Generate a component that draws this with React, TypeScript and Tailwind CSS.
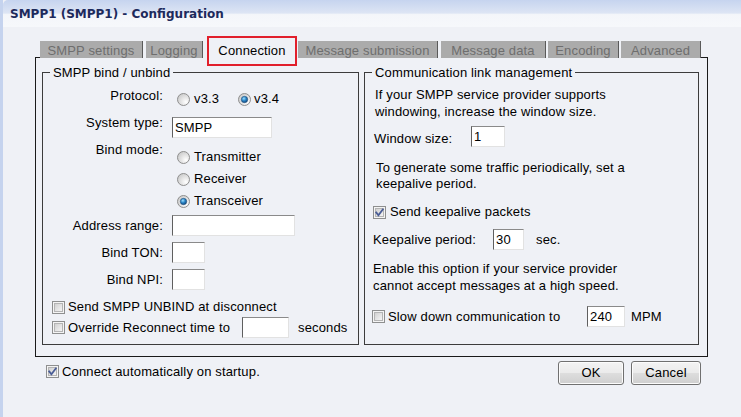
import React from "react";

function Radio({ checked }: { checked?: boolean }) {
  return (
    <svg width="13" height="13" viewBox="0 0 13 13" className="shrink-0">
      <defs>
        <radialGradient id="rgOuter" cx="0.7" cy="0.7" r="0.8">
          <stop offset="0" stopColor="#ffffff" />
          <stop offset="1" stopColor="#c9c9c9" />
        </radialGradient>
        <radialGradient id="rgDot" cx="0.4" cy="0.35" r="0.75">
          <stop offset="0" stopColor="#9fe0ff" />
          <stop offset="0.45" stopColor="#2a86c8" />
          <stop offset="1" stopColor="#0b3a6e" />
        </radialGradient>
      </defs>
      <circle cx="6.5" cy="6.5" r="6" fill="url(#rgOuter)" stroke="#8f8f8f" strokeWidth="1" />
      {checked && <circle cx="6.5" cy="6.5" r="3.2" fill="url(#rgDot)" stroke="#244f7a" strokeWidth="0.6" />}
    </svg>
  );
}

function Check({ checked }: { checked?: boolean }) {
  return (
    <svg width="13" height="13" viewBox="0 0 13 13" className="shrink-0">
      <defs>
        <linearGradient id="cbIn" x1="0" y1="0" x2="1" y2="1">
          <stop offset="0" stopColor="#cfcfcf" />
          <stop offset="1" stopColor="#f7f7f7" />
        </linearGradient>
      </defs>
      <rect x="0.5" y="0.5" width="12" height="12" fill="#f4f4f4" stroke="#8e8f8f" />
      <rect x="2.5" y="2.5" width="8" height="8" fill="url(#cbIn)" stroke="#b4b4b4" />
      {checked && (
        <path d="M3.2 6.4 L5.4 9.2 L9.8 3.4" fill="none" stroke="#4a5d96" strokeWidth="1.8" strokeLinecap="square" />
      )}
    </svg>
  );
}

function Box({ w, value }: { w: string; value?: string }) {
  return (
    <div
      className={`${w} h-[21px] shrink-0 bg-white border border-t-[#8a8a8a] border-l-[#5f5f5f] border-r-[#e2e2e2] border-b-[#e2e2e2] pl-[2px] leading-[19px] text-black`}
    >
      {value}
    </div>
  );
}

function Tab({ w, label, ml }: { w: string; label: string; ml?: string }) {
  return (
    <div
      className={`${w} ${ml ?? ""} h-[17px] shrink-0 bg-[#ababab] border-r border-r-[#5a5a5a] text-[#6e6e6e] text-center leading-[17px] pt-[1px]`}
    >
      {label}
    </div>
  );
}

export default function App() {
  return (
    <div className="w-[741px] h-[417px] overflow-hidden bg-[#eff1f6] border-l-[3px] border-l-[#c5d3ee] font-['Liberation_Sans',Arial,sans-serif] text-[13px] text-black tracking-[0.15px]">
      {/* Title bar */}
      <div className="h-[27px] flex items-center pl-[7px] rounded-tl-[5px] bg-[linear-gradient(to_bottom,#c6d4ef_0%,#dde5f4_48%,#f4f6fa_54%,#f6f8fb_100%)]">
        <span className="font-['DejaVu_Sans',Verdana,sans-serif] font-bold text-[12px] tracking-normal text-[#1d2a5c]">
          SMPP1 (SMPP1) - Configuration
        </span>
      </div>

      {/* Tabs + panel */}
      <div className="ml-[32px] mt-[14px] w-[673px]">
        <div className="flex h-[17px]">
          <div className="w-[5px] h-[17px] border-b border-b-[#1a1a1a] shrink-0" />
          <Tab w="w-[103px]" label="SMPP settings" />
          <Tab w="w-[57px]" ml="ml-[3px]" label="Logging" />
          <div className="relative ml-[1px] w-[94px] h-[17px] shrink-0 text-center leading-[17px] text-black pl-[2px] pt-[1px]">
            Connection
            <div className="absolute left-[3px] right-[1px] -top-[5px] -bottom-[8px] border-2 border-[#e11f2b] z-10" />
          </div>
          <Tab w="w-[140px]" label="Message submission" />
          <Tab w="w-[105px]" ml="ml-[3px]" label="Message data" />
          <Tab w="w-[71px]" ml="ml-[2px]" label="Encoding" />
          <Tab w="w-[80px]" ml="ml-[2px]" label="Advanced" />
          <div className="flex-1 h-[17px] border-b border-b-[#1a1a1a]" />
        </div>

        <div className="h-[299px] border-l border-r border-b border-[#1a1a1a] pt-[7px] pl-[6px] pr-[8px] flex gap-[5px]">
          {/* Left group */}
          <fieldset className="w-[317px] h-[280px] shrink-0 border border-[#3c3c3c] m-0 p-0 min-w-0">
            <legend className="ml-[7px] px-[3px] leading-[15px]">SMPP bind / unbind</legend>

            <div className="flex items-center h-[22px] mt-[8px]">
              <div className="w-[120px] text-right mb-[6px]">Protocol:</div>
              <div className="ml-[14px] flex">
                <div className="w-[61px] flex items-center gap-[4px]">
                  <Radio />
                  <span>v3.3</span>
                </div>
                <div className="flex items-center gap-[3px]">
                  <Radio checked />
                  <span>v3.4</span>
                </div>
              </div>
            </div>

            <div className="flex items-center h-[21px] mt-[7px]">
              <div className="w-[120px] text-right mb-[9px]">System type:</div>
              <div className="ml-[9px]">
                <Box w="w-[100px]" value="SMPP" />
              </div>
            </div>

            <div className="flex items-center h-[22px] mt-[8px]">
              <div className="w-[120px] text-right mb-[14px]">Bind mode:</div>
              <div className="ml-[14px] flex items-center gap-[4px]">
                <Radio />
                <span>Transmitter</span>
              </div>
            </div>
            <div className="flex items-center h-[22px]">
              <div className="w-[120px]" />
              <div className="ml-[14px] flex items-center gap-[4px]">
                <Radio />
                <span>Receiver</span>
              </div>
            </div>
            <div className="flex items-center h-[22px]">
              <div className="w-[120px]" />
              <div className="ml-[14px] flex items-center gap-[4px]">
                <Radio checked />
                <span>Transceiver</span>
              </div>
            </div>

            <div className="flex items-center h-[21px] mt-[3px]">
              <div className="w-[120px] text-right">Address range:</div>
              <div className="ml-[9px]">
                <Box w="w-[123px]" />
              </div>
            </div>
            <div className="flex items-center h-[21px] mt-[6px]">
              <div className="w-[120px] text-right">Bind TON:</div>
              <div className="ml-[9px]">
                <Box w="w-[33px]" />
              </div>
            </div>
            <div className="flex items-center h-[21px] mt-[6px]">
              <div className="w-[120px] text-right">Bind NPI:</div>
              <div className="ml-[9px]">
                <Box w="w-[33px]" />
              </div>
            </div>

            <div className="flex items-center h-[20px] mt-[7px] pl-[9px] gap-[3px]">
              <Check />
              <span>Send SMPP UNBIND at disconnect</span>
            </div>
            <div className="flex items-center h-[21px] pl-[9px]">
              <div className="w-[190px] flex items-center gap-[3px]">
                <Check />
                <span>Override Reconnect time to</span>
              </div>
              <Box w="w-[47px]" />
              <span className="ml-[9px]">seconds</span>
            </div>
          </fieldset>

          {/* Right group */}
          <fieldset className="flex-1 h-[280px] border border-[#3c3c3c] m-0 p-0 min-w-0">
            <legend className="ml-[7px] px-[3px] leading-[15px]">Communication link management</legend>
            <div className="pl-[8px]">
              <div className="mt-[6px] ml-[2px] leading-[17px]">
                If your SMPP service provider supports
                <br />
                windowing, increase the window size.
              </div>

              <div className="flex items-center h-[21px] mt-[6px]">
                <div className="w-[98px] pl-[1px] mt-[5px]">Window size:</div>
                <Box w="w-[34px]" value="1" />
              </div>

              <div className="mt-[13px] ml-[3px] leading-[16px]">
                To generate some traffic periodically, set a
                <br />
                keepalive period.
              </div>

              <div className="flex items-center h-[20px] mt-[10px] gap-[4px]">
                <Check checked />
                <span>Send keepalive packets</span>
              </div>

              <div className="flex items-center h-[21px] mt-[7px]">
                <div className="w-[120px]">Keepalive period:</div>
                <Box w="w-[31px]" value="30" />
                <span className="ml-[12px]">sec.</span>
              </div>

              <div className="mt-[10px] leading-[17px]">
                Enable this option if your service provider
                <br />
                cannot accept messages at a high speed.
              </div>

              <div className="flex items-center h-[21px] mt-[12px] -ml-[1px]">
                <div className="w-[215px] flex items-center gap-[3px]">
                  <Check />
                  <span>Slow down communication to</span>
                </div>
                <Box w="w-[38px]" value="240" />
                <span className="ml-[6px]">MPM</span>
              </div>
            </div>
          </fieldset>
        </div>
      </div>

      {/* Bottom row */}
      <div className="flex items-start justify-between pl-[43px] pr-[40px]">
        <div className="mt-[7px] h-[15px] flex items-center gap-[3px]">
          <Check checked />
          <span>Connect automatically on startup.</span>
        </div>
        <div className="mt-[4px] flex gap-[7px]">
          <button className="w-[66px] h-[24px] rounded-[3px] border border-[#707070] bg-[linear-gradient(to_bottom,#f3f3f3_0%,#ebebeb_48%,#dddddd_52%,#cfcfcf_100%)] text-black leading-[22px] shadow-[inset_0_0_0_1px_#fcfcfc]">
            OK
          </button>
          <button className="w-[70px] h-[24px] rounded-[3px] border border-[#707070] bg-[linear-gradient(to_bottom,#f3f3f3_0%,#ebebeb_48%,#dddddd_52%,#cfcfcf_100%)] text-black leading-[22px] shadow-[inset_0_0_0_1px_#fcfcfc]">
            Cancel
          </button>
        </div>
      </div>
    </div>
  );
}
